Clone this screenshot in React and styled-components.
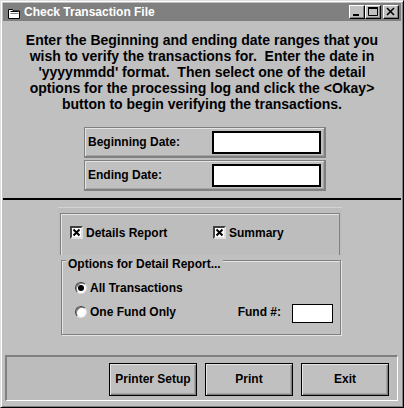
import React from "react";
import styled, { createGlobalStyle } from "styled-components";

const GlobalStyle = createGlobalStyle`
  html, body {
    margin: 0;
    padding: 0;
    background: #c0c0c0;
  }
  body {
    font-family: "Liberation Sans", Arial, sans-serif;
    color: #000;
  }
`;

const lines = [
  "Enter the Beginning and ending date ranges that you",
  "wish to verify the transactions for.  Enter the date in",
  "'yyyymmdd' format.  Then select one of the detail",
  "options for the processing log and click the <Okay>",
  "button to begin verifying the transactions.",
];

const App = () => {
  return (
    <>
      <GlobalStyle />
      <Window>
        <TitleBar>
          <TitleIcon />
          <TitleText>Check Transaction File</TitleText>
          <CaptionButton>
            <svg width="14" height="12" viewBox="0 0 14 12">
              <rect x="3" y="8" width="6" height="2" fill="#000" />
            </svg>
          </CaptionButton>
          <CaptionButton>
            <svg width="14" height="12" viewBox="0 0 14 12">
              <path d="M2.5 1.5h9v8h-9z" fill="none" stroke="#000" />
              <rect x="2" y="1" width="10" height="2" fill="#000" />
            </svg>
          </CaptionButton>
          <CaptionButton $gap>
            <svg width="14" height="12" viewBox="0 0 14 12">
              <path d="M3 2l7 7M10 2l-7 7" stroke="#000" strokeWidth="1.6" />
            </svg>
          </CaptionButton>
        </TitleBar>

        <Body>
          <Instructions>
            {lines.map((l) => (
              <Line key={l}>{l}</Line>
            ))}
          </Instructions>

          <DateFrame>
            <DateRow>
              <Label>Beginning Date:</Label>
              <DateInput />
            </DateRow>
            <DateRow>
              <Label>Ending Date:</Label>
              <DateInput />
            </DateRow>
          </DateFrame>

          <Separator />

          <CheckFrame>
            <CheckGroup>
              <CheckItem $width={143}>
                <CheckBox />
                <Label>Details Report</Label>
              </CheckItem>
              <CheckItem>
                <CheckBox />
                <Label>Summary</Label>
              </CheckItem>
            </CheckGroup>
          </CheckFrame>

          <OptionsFrame>
            <FrameCaption>Options for Detail Report...</FrameCaption>
            <RadioRow>
              <Radio $checked />
              <Label>All Transactions</Label>
            </RadioRow>
            <RadioRow>
              <Radio />
              <Label>One Fund Only</Label>
              <FundGroup>
                <Label>Fund #:</Label>
                <FundInput />
              </FundGroup>
            </RadioRow>
          </OptionsFrame>

          <ButtonPanel>
            <Button>Printer Setup</Button>
            <Button>Print</Button>
            <Button>Exit</Button>
          </ButtonPanel>
        </Body>
      </Window>
    </>
  );
};

export default App;

const TitleIcon = () => (
  <IconWrap>
    <svg width="13" height="11" viewBox="0 0 13 11">
      <path d="M0.5 1.5h4l1 1.5h6v7.5h-11z" fill="#fff" stroke="#000" />
      <path d="M2.5 3.5h8" stroke="#000" />
      <path d="M2.5 5.5h8" stroke="#808080" />
    </svg>
  </IconWrap>
);

const CheckBox = () => (
  <Box>
    <svg width="9" height="9" viewBox="0 0 9 9">
      <path d="M1.5 1.5l6 6M7.5 1.5l-6 6" stroke="#000" strokeWidth="2" />
    </svg>
  </Box>
);

const Window = styled.div`
  width: 404px;
  height: 408px;
  box-sizing: border-box;
  background: #c0c0c0;
  border: 1px solid;
  border-color: #dfdfdf #000 #000 #dfdfdf;
  box-shadow: inset 1px 1px #fff, inset -1px -1px #808080;
  padding: 2px;
  display: flex;
  flex-direction: column;
`;

const TitleBar = styled.div`
  height: 18px;
  background: #808080;
  display: flex;
  align-items: center;
  padding: 0 2px 0 5px;
`;

const IconWrap = styled.div`
  width: 13px;
  height: 11px;
  margin-top: 2px;
  margin-right: 3px;
  display: flex;
`;

const TitleText = styled.div`
  flex: 1;
  color: #fff;
  font-size: 12px;
  font-weight: bold;
  line-height: 14px;
`;

const CaptionButton = styled.div`
  width: 16px;
  height: 14px;
  box-sizing: border-box;
  margin-left: ${(p) => (p.$gap ? "2px" : "0")};
  background: #c0c0c0;
  border: 1px solid;
  border-color: #fff #000 #000 #fff;
  box-shadow: inset -1px -1px #808080;
  display: flex;
  svg {
    display: block;
  }
`;

const Body = styled.div`
  flex: 1;
  display: flex;
  flex-direction: column;
`;

const Instructions = styled.div`
  margin-top: 11px;
  font-size: 14px;
  font-weight: bold;
  line-height: 16px;
  text-align: center;
`;

const Line = styled.span`
  display: block;
  white-space: pre;
`;

const DateFrame = styled.div`
  margin: 15px 0 0 81px;
  width: 242px;
  display: flex;
  flex-direction: column;
  gap: 2px;
`;

const DateRow = styled.div`
  height: 31px;
  box-sizing: border-box;
  display: flex;
  align-items: center;
  justify-content: space-between;
  padding: 0 3px 0 3px;
  border-style: solid;
  border-width: 1px 2px 2px 1px;
  border-color: #808080;
  box-shadow: inset 1px 1px #e4e4e4, inset -1px -1px #a4a4a4;
`;

const Label = styled.span`
  font-size: 12px;
  font-weight: bold;
  line-height: 14px;
  white-space: nowrap;
`;

const DateInput = styled.div`
  width: 109px;
  height: 23px;
  box-sizing: border-box;
  background: #fff;
  border: 2px solid #000;
`;

const Separator = styled.div`
  height: 2px;
  margin-top: 7px;
  background: #000;
`;

const CheckFrame = styled.div`
  margin: 7px 0 0 55px;
  width: 284px;
  height: 48px;
  box-sizing: border-box;
  padding: 5px 2px 0 2px;
  border-top: 1px solid #d4d4d4;
  background: #bdbdbd;
`;

const CheckGroup = styled.div`
  height: 100%;
  box-sizing: border-box;
  border: 1px solid #808080;
  border-bottom: none;
  box-shadow: inset 1px 1px #e4e4e4;
  display: flex;
  align-items: center;
  padding: 0 0 4px 9px;
`;

const CheckItem = styled.div`
  display: flex;
  align-items: center;
  gap: 3px;
  width: ${(p) => (p.$width ? `${p.$width}px` : "auto")};
`;

const Box = styled.div`
  width: 13px;
  height: 13px;
  box-sizing: border-box;
  background: #fff;
  border: 2px solid;
  border-color: #404040 #dfdfdf #dfdfdf #404040;
  display: flex;
  svg {
    display: block;
  }
`;

const OptionsFrame = styled.div`
  position: relative;
  margin: 5px 0 0 58px;
  width: 280px;
  height: 75px;
  box-sizing: border-box;
  border: 1px solid #808080;
  box-shadow: inset 1px 1px #e4e4e4, 1px 1px #e4e4e4;
  padding: 15px 7px 0 13px;
  display: flex;
  flex-direction: column;
`;

const FrameCaption = styled.span`
  position: absolute;
  top: -4px;
  left: 4px;
  padding: 0 2px;
  background: #c0c0c0;
  font-size: 12px;
  font-weight: bold;
  line-height: 14px;
`;

const RadioRow = styled.div`
  height: 24px;
  display: flex;
  align-items: center;
  gap: 3px;
`;

const Radio = styled.div`
  width: 12px;
  height: 12px;
  box-sizing: border-box;
  border-radius: 50%;
  background: #fff;
  border: 1px solid;
  border-color: #404040 #dfdfdf #dfdfdf #404040;
  box-shadow: inset 1px 1px #808080;
  display: flex;
  align-items: center;
  justify-content: center;
  &::after {
    content: "";
    width: 6px;
    height: 6px;
    border-radius: 50%;
    background: ${(p) => (p.$checked ? "#000" : "transparent")};
  }
`;

const FundGroup = styled.div`
  margin-left: auto;
  display: flex;
  align-items: center;
  gap: 11px;
`;

const FundInput = styled.div`
  width: 41px;
  height: 19px;
  box-sizing: border-box;
  margin-top: 2px;
  background: #fff;
  border: 1px solid #000;
`;

const ButtonPanel = styled.div`
  margin: 20px 3px 0 2px;
  height: 46px;
  box-sizing: border-box;
  border-style: solid;
  border-width: 2px 1px 1px 2px;
  border-color: #808080 #fff #fff #808080;
  background: #bcbcbc;
  display: flex;
  align-items: center;
  justify-content: flex-end;
  gap: 8px;
  padding: 1px 8px 0 0;
`;

const Button = styled.div`
  width: 88px;
  height: 33px;
  box-sizing: border-box;
  background: #c0c0c0;
  border: 1px solid #000;
  box-shadow: inset 1px 1px #e4e4e4, inset -1px -1px #808080,
    inset -2px -2px #a4a4a4;
  display: flex;
  align-items: center;
  justify-content: center;
  font-size: 12px;
  font-weight: bold;
`;
